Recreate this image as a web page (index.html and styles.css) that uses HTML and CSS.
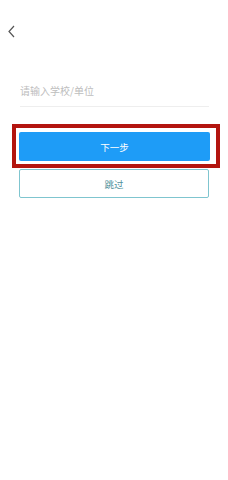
FILE: index.html
```html
<!doctype html>
<html>
	<head>
		<title>填写学校</title>
		<link rel="stylesheet" href="styles.css">
	</head>

	<body>
		<div class="top-bar">
			<button class="back-button" aria-label="返回">
				<svg width="9" height="13" viewBox="0 0 9 13" xmlns="http://www.w3.org/2000/svg">
					<path d="M7 1 L2 6.5 L7 12" fill="none" stroke="#555" stroke-width="1.2" />
				</svg>
			</button>
		</div>

		<div class="form">
			<div class="school-field">
				<input type="text" placeholder="请输入学校/单位" />
			</div>

			<div class="highlight">
				<button class="next-button">下一步</button>
			</div>
			<button class="skip-button">跳过</button>
		</div>
	</body>
</html>
```

FILE: styles.css
```css
body {
	margin: 0px;
	width: 228px;
	height: 480px;
	background-color: #ffffff;
	font-family: "Noto Sans CJK SC", "Noto Sans", sans-serif;
	color: #333333;
}

.top-bar {
	height: 64px;
	padding-left: 7px;
	padding-top: 25px;
	box-sizing: border-box;
}

.back-button {
	background: none;
	border: none;
	padding: 0;
	display: block;
	cursor: pointer;
}

.form {
	padding: 0 19px;
	display: flex;
	flex-direction: column;
}

.school-field {
	margin-top: 14px;
	border-bottom: 1px solid #eeeeee;
	height: 29px;
	padding-bottom: 4px;
	box-sizing: border-box;
	display: flex;
	align-items: center;
	margin-left: 1px;
}

.school-field input[type="text"] {
	border: none;
	outline: none;
	padding: 0;
	width: 100%;
	font-family: inherit;
	font-size: 10px;
	color: #333333;
	background: transparent;
}

.school-field input::placeholder {
	color: #bdbdbd;
}

/* red annotation frame around the main button */
.highlight {
	margin: 17px -11px 0 -7px;
	border: 4px solid #b3150f;
	padding: 4px 6px 3px 3px;
}

.next-button,
.skip-button {
	display: block;
	width: 100%;
	height: 29px;
	border-radius: 2px;
	font-family: inherit;
	font-size: 9.5px;
	cursor: pointer;
}

.next-button {
	background-color: #1e9cf7;
	color: #ffffff;
	border: none;
}

.skip-button {
	margin-top: 1px;
	background-color: #ffffff;
	color: #4f8f9a;
	border: 1px solid #7fc5cf;
}
```
